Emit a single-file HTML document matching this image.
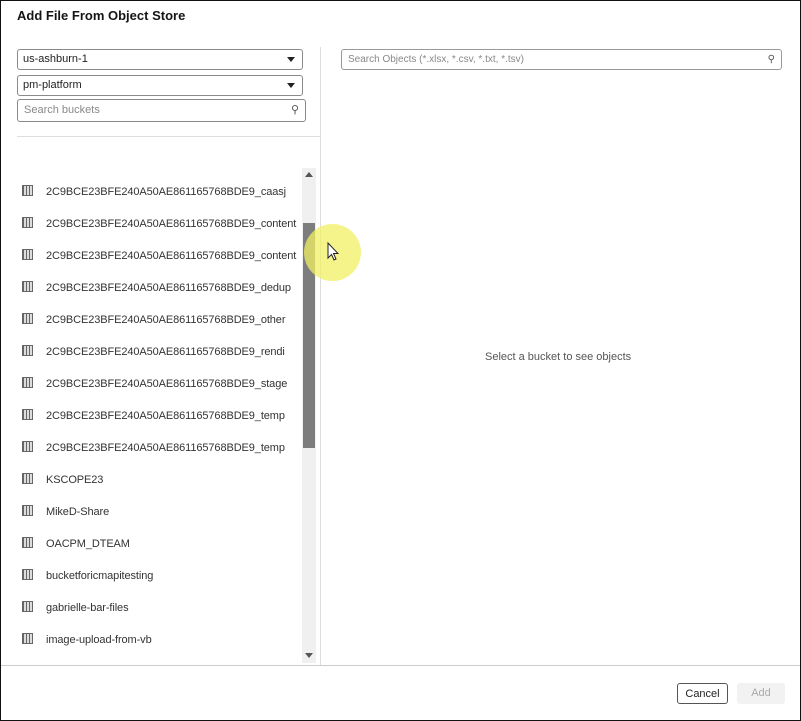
<!DOCTYPE html><html><head><style>
body{margin:0;width:801px;height:721px;overflow:hidden;background:#fff;font-family:"Liberation Sans",sans-serif;position:relative}
.frame{position:absolute;left:0;top:0;width:799px;height:719px;border:1px solid #111}
.a{position:absolute}
.t{font-size:13px;font-weight:bold;color:#161513;left:17px;top:8px}
.sel{position:absolute;left:17px;width:286px;height:21px;border:1px solid #8a8a8a;border-radius:3px;font-size:11px;color:#222;line-height:19px;padding-left:5px;box-sizing:border-box}
.sel:after{content:"";position:absolute;right:7px;top:7px;border-left:4px solid transparent;border-right:4px solid transparent;border-top:5px solid #222}
.srch{position:absolute;left:17px;top:99px;width:289px;height:23px;border:1px solid #8a8a8a;border-radius:3px;font-size:11px;color:#888;line-height:21px;padding-left:6px;box-sizing:border-box}
.row{position:absolute;left:22px;font-size:11px;color:#333;white-space:nowrap;width:278px;overflow:hidden;letter-spacing:-0.1px}
.ic{display:inline-block;width:9px;height:9px;border:1px solid #666;margin-right:13px;vertical-align:-1px;background:repeating-linear-gradient(90deg,#666 0 1px,#ddd 1px 3px)}
</style></head><body>
<div class="frame"></div>
<div class="a t">Add File From Object Store</div>
<div class="sel" style="top:49px">us-ashburn-1</div>
<div class="sel" style="top:75px">pm-platform</div>
<div class="srch">Search buckets<span style="position:absolute;right:6px;top:0;color:#555">&#9906;</span></div>
<div class="a" style="left:17px;top:136px;width:303px;height:1px;background:#ddd"></div>
<div class="a" style="left:320px;top:47px;width:1px;height:618px;background:#ddd"></div>
<div class="a" style="left:341px;top:49px;width:441px;height:21px;border:1px solid #999;border-radius:3px;box-sizing:border-box;font-size:10px;color:#888;line-height:19px;padding-left:6px">Search Objects (*.xlsx, *.csv, *.txt, *.tsv)<span style="position:absolute;right:6px;color:#555">&#9906;</span></div>
<div class="a" style="left:485px;top:351px;font-size:11px;color:#555">Select a bucket to see objects</div>
<div class="a" style="left:302px;top:168px;width:14px;height:495px;background:#f0f0f0"></div>
<div class="a" style="left:303px;top:223px;width:12px;height:225px;background:#7d7d7d"></div>
<div class="a" style="left:305px;top:172px;border-left:4px solid transparent;border-right:4px solid transparent;border-bottom:5px solid #555"></div>
<div class="a" style="left:305px;top:653px;border-left:4px solid transparent;border-right:4px solid transparent;border-top:5px solid #555"></div>
<div class="row" style="top:185px"><span class="ic"></span>2C9BCE23BFE240A50AE861165768BDE9_caasj</div>
<div class="row" style="top:217px"><span class="ic"></span>2C9BCE23BFE240A50AE861165768BDE9_content</div>
<div class="row" style="top:249px"><span class="ic"></span>2C9BCE23BFE240A50AE861165768BDE9_content</div>
<div class="row" style="top:281px"><span class="ic"></span>2C9BCE23BFE240A50AE861165768BDE9_dedup</div>
<div class="row" style="top:313px"><span class="ic"></span>2C9BCE23BFE240A50AE861165768BDE9_other</div>
<div class="row" style="top:345px"><span class="ic"></span>2C9BCE23BFE240A50AE861165768BDE9_rendi</div>
<div class="row" style="top:377px"><span class="ic"></span>2C9BCE23BFE240A50AE861165768BDE9_stage</div>
<div class="row" style="top:409px"><span class="ic"></span>2C9BCE23BFE240A50AE861165768BDE9_temp</div>
<div class="row" style="top:441px"><span class="ic"></span>2C9BCE23BFE240A50AE861165768BDE9_temp</div>
<div class="row" style="top:473px"><span class="ic"></span>KSCOPE23</div>
<div class="row" style="top:505px"><span class="ic"></span>MikeD-Share</div>
<div class="row" style="top:537px"><span class="ic"></span>OACPM_DTEAM</div>
<div class="row" style="top:569px"><span class="ic"></span>bucketforicmapitesting</div>
<div class="row" style="top:601px"><span class="ic"></span>gabrielle-bar-files</div>
<div class="row" style="top:633px"><span class="ic"></span>image-upload-from-vb</div>
<div class="a" style="left:304px;top:224px;width:57px;height:57px;border-radius:50%;background:rgba(240,240,100,.75)"></div>
<svg class="a" style="left:327px;top:242px" width="12" height="20" viewBox="0 0 12 20"><path d="M1 1 L1 16 L4.5 12.5 L7 18 L9 17 L6.5 11.5 L11 11.5 Z" fill="#fff" stroke="#222" stroke-width="1"/></svg>
<div class="a" style="left:1px;top:665px;width:799px;height:1px;background:#ccc"></div>
<div class="a" style="left:677px;top:683px;width:51px;height:21px;border:1px solid #555;border-radius:3px;box-sizing:border-box;font-size:11px;text-align:center;line-height:20px;color:#222">Cancel</div>
<div class="a" style="left:737px;top:683px;width:48px;height:21px;background:#f2f2f2;border-radius:3px;font-size:11px;text-align:center;line-height:21px;color:#aaa">Add</div>
</body></html>
